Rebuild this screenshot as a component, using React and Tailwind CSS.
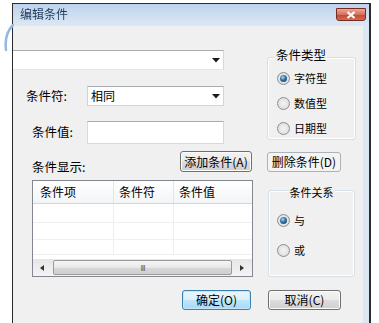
const BTN = 'flex items-center justify-center rounded-[3px] text-[12px] leading-none text-black';

function Arrow() {
  return (
    <svg width="8" height="5" viewBox="0 0 8 5" className="shrink-0">
      <polygon points="0,0 8,0 4,4.5" fill="#1a1a1a" />
    </svg>
  );
}

function Radio({ checked, label }) {
  return (
    <div className="flex items-center gap-[4px] h-[14px]">
      <span className="w-[13px] h-[13px] rounded-full border border-[#8e8f8f] bg-[radial-gradient(circle_at_50%_50%,#f4f4f4_0%,#e3e3e3_60%,#c9c9c9_100%)] flex items-center justify-center shrink-0">
        {checked && (
          <span className="w-[7px] h-[7px] rounded-full bg-[radial-gradient(circle_at_40%_35%,#a9dbf7_0%,#2f6f9f_45%,#143a5a_100%)]" />
        )}
      </span>
      <span className="text-[11px] leading-none text-black">{label}</span>
    </div>
  );
}

export default function App() {
  return (
    <div className="relative w-[379px] h-[323px] bg-white overflow-hidden font-['Noto_Sans_CJK_SC','Microsoft_YaHei',sans-serif]">
      {/* stray blue arc at the left of the crop */}
      <svg className="absolute left-0 top-[22px]" width="14" height="32" viewBox="0 0 14 32">
        <path d="M13 3 Q4 12 6 28" stroke="#8fbbe2" strokeWidth="2.5" fill="none" strokeLinecap="round" />
      </svg>

      <div className="ml-[12px] mt-[3px] w-[359px] h-[320px] border-l border-t border-r-2 border-[#2b2b2b] flex flex-col">
        {/* ── Title bar ── */}
        <div className="h-[22px] flex justify-between bg-[linear-gradient(to_bottom,#bcd3ec_0%,#cfdff1_55%,#dce8f5_100%)]">
          <span className="pl-[7px] pt-[4px] text-[12px] leading-none text-[#1e3a5c] blur-[0.3px]">编辑条件</span>
          <div className="mt-[4px] mr-[3px] w-[30px] h-[13px] rounded-b-[3px] border border-[#7a2a1e] bg-[linear-gradient(to_bottom,#e9a99a_0%,#d7705c_50%,#c24a33_55%,#d26a50_100%)] flex items-center justify-center">
            <svg width="10" height="8" viewBox="0 0 10 8">
              <path d="M1.5 1 L8.5 7 M8.5 1 L1.5 7" stroke="#fff" strokeWidth="2.2" />
            </svg>
          </div>
        </div>

        {/* ── Body ── */}
        <div className="flex-1 flex">
          <div className="w-[350px] bg-[#f0f0f0] flex flex-col">
            <div className="flex">
              {/* Left column */}
              <div className="w-[254px] flex flex-col">
                <div className="mt-[24px] w-[211px] h-[20px] bg-white border-t border-r border-b border-t-[#a9abb1] border-r-[#d5d8dd] border-b-[#e3e6ea] flex items-center justify-end pr-[3px]">
                  <Arrow />
                </div>

                <div className="mt-[16px] h-[20px] flex items-center">
                  <span className="w-[74px] pl-[13px] text-[12.5px] leading-none">条件符:</span>
                  <div className="w-[137px] h-[20px] bg-white border border-[#d0d3d8] border-t-[#a9abb1] flex items-center justify-between pl-[3px] pr-[3px]">
                    <span className="text-[12px] leading-none">相同</span>
                    <Arrow />
                  </div>
                </div>

                <div className="mt-[15px] h-[23px] flex items-center">
                  <span className="w-[74px] pl-[19px] text-[12.5px] leading-none">条件值:</span>
                  <div className="w-[137px] h-[23px] bg-white border border-[#d6d9de] border-t-[#a9abb1]" />
                </div>

                <div className="mt-[7px] h-[21px] flex items-end">
                  <span className="w-[167px] pl-[19px] text-[12.5px] leading-none -mb-[1px]">条件显示:</span>
                  <div className={`${BTN} w-[72px] h-[21px] border border-[#707070] bg-[linear-gradient(to_bottom,#f2f2f2_0%,#ebebeb_50%,#dddddd_50%,#cfcfcf_100%)] shadow-[inset_0_0_0_1px_#fbfbfb]`}>
                    添加条件(A)
                  </div>
                </div>

                {/* List view */}
                <div className="mt-[8px] ml-[19px] w-[221px] h-[97px] bg-white border border-[#828790] flex flex-col">
                  <div className="h-[23px] flex border-b border-[#d5d5d5] bg-[linear-gradient(to_bottom,#ffffff,#f3f4f6)] text-[12px] leading-none">
                    <div className="w-[81px] pl-[7px] flex items-center border-r border-[#e2e5ea]">条件项</div>
                    <div className="w-[60px] pl-[5px] flex items-center border-r border-[#e2e5ea]">条件符</div>
                    <div className="flex-1 pl-[5px] flex items-center">条件值</div>
                  </div>
                  <div className="flex-1 flex flex-col">
                    {[19, 17, 15].map((h, i) => (
                      <div key={i} style={{ height: h }} className="flex border-b border-[#f0f0f0]">
                        <div className="w-[81px] border-r border-[#eeeeee]" />
                        <div className="w-[60px] border-r border-[#eeeeee]" />
                        <div className="flex-1" />
                      </div>
                    ))}
                  </div>
                  {/* horizontal scrollbar */}
                  <div className="h-[17px] flex items-center bg-[linear-gradient(to_bottom,#e6e6e6,#f4f4f4)]">
                    <div className="w-[17px] flex justify-center">
                      <svg width="4" height="6" viewBox="0 0 4 6"><polygon points="4,0 4,6 0,3" fill="#333" /></svg>
                    </div>
                    <div className="ml-[3px] w-[179px] h-[15px] rounded-[2px] border border-[#9a9a9a] bg-[linear-gradient(to_bottom,#f6f6f6_0%,#e8e8e8_50%,#d8d8d8_51%,#cfcfcf_100%)] flex items-center justify-center">
                      <span className="text-[8px] leading-none text-[#555] tracking-[-1px]">III</span>
                    </div>
                    <div className="flex-1 flex justify-center">
                      <svg width="4" height="6" viewBox="0 0 4 6"><polygon points="0,0 0,6 4,3" fill="#333" /></svg>
                    </div>
                  </div>
                </div>
              </div>

              {/* Right column */}
              <div className="flex flex-col">
                <div className="relative mt-[31px] w-[89px] h-[83px] rounded-[3px] border border-[#d5dfe5] shadow-[inset_0_0_0_1px_#fff] pl-[9px] pt-[13px] flex flex-col gap-[11px]">
                  <span className="absolute left-[7px] -top-[9px] px-[1px] bg-[#f0f0f0] text-[12.5px] leading-none">条件类型</span>
                  <Radio checked label="字符型" />
                  <Radio label="数值型" />
                  <Radio label="日期型" />
                </div>

                <div className={`${BTN} mt-[12px] w-[74px] h-[20px] border border-[#adb2b5] bg-[#f4f4f4] text-[#838383]`}>
                  删除条件(D)
                </div>

                <div className="relative mt-[18px] ml-[1px] w-[87px] h-[87px] rounded-[3px] border border-[#d5dfe5] shadow-[inset_0_0_0_1px_#fff] pl-[8px] pt-[22px] flex flex-col gap-[16px]">
                  <span className="absolute left-1/2 -translate-x-1/2 -top-[4px] px-[1px] bg-[#f0f0f0] text-[11px] leading-none whitespace-nowrap">条件关系</span>
                  <Radio checked label="与" />
                  <Radio label="或" />
                </div>
              </div>
            </div>

            {/* ── Buttons ── */}
            <div className="mt-[13px] flex">
              <div className={`${BTN} ml-[169px] w-[69px] h-[20px] border border-[#3c7fb1] bg-[linear-gradient(to_bottom,#eaf6fd_0%,#d9f0fc_50%,#bee6fd_50%,#a7d9f5_100%)] shadow-[inset_0_0_0_1px_#c6e6f8]`}>
                确定(O)
              </div>
              <div className={`${BTN} ml-[17px] w-[73px] h-[20px] border border-[#707070] bg-[linear-gradient(to_bottom,#f2f2f2_0%,#ebebeb_50%,#dddddd_50%,#cfcfcf_100%)] shadow-[inset_0_0_0_1px_#fbfbfb]`}>
                取消(C)
              </div>
            </div>
          </div>
          <div className="flex-1 bg-[#dce7f3]" />
        </div>
      </div>
    </div>
  );
}
